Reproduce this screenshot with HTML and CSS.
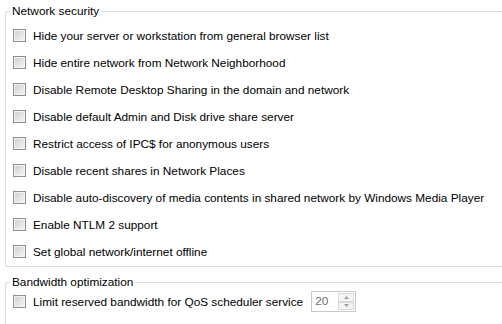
FILE: index.html
```html
<!doctype html>
<html lang="en">
  <head>
    <meta charset="UTF-8" />
    <title>Network settings</title>
    <link rel="stylesheet" href="styles.css">
  </head>
  <body>
    <fieldset class="group">
      <legend>Network security</legend>
      <label class="row"><span class="check"></span>Hide your server or workstation from general browser list</label>
      <label class="row"><span class="check"></span>Hide entire network from Network Neighborhood</label>
      <label class="row"><span class="check"></span>Disable Remote Desktop Sharing in the domain and network</label>
      <label class="row"><span class="check"></span>Disable default Admin and Disk drive share server</label>
      <label class="row"><span class="check"></span>Restrict access of IPC$ for anonymous users</label>
      <label class="row"><span class="check"></span>Disable recent shares in Network Places</label>
      <label class="row"><span class="check"></span>Disable auto-discovery of media contents in shared network by Windows Media Player</label>
      <label class="row"><span class="check"></span>Enable NTLM 2 support</label>
      <label class="row"><span class="check"></span>Set global network/internet offline</label>
    </fieldset>

    <fieldset class="group second">
      <legend>Bandwidth optimization</legend>
      <div class="row short">
        <span class="check"></span>Limit reserved bandwidth for QoS scheduler service
        <span class="spin">
          <span class="spin-value">20</span>
          <span class="spin-buttons">
            <span class="spin-btn"><svg width="5" height="3" viewBox="0 0 5 3"><path d="M0 3 L2.5 0 L5 3 Z" fill="#a0a0a0"/></svg></span>
            <span class="spin-btn"><svg width="5" height="3" viewBox="0 0 5 3"><path d="M0 0 L2.5 3 L5 0 Z" fill="#a0a0a0"/></svg></span>
          </span>
        </span>
      </div>
    </fieldset>
  </body>
</html>
```

FILE: styles.css
```css
body {
  margin: 0;
  background: #fff;
  font-family: "Liberation Sans", Arial, sans-serif;
  font-size: 11.8px;
  color: #000;
}
.group {
  margin: 4px 0 0 5px;
  padding: 4px 0 1px 7px;
  border: 1px solid #d5dfe5;
  border-right: none;
  border-radius: 3px 0 0 3px;
  min-width: 0;
}
.group legend {
  padding: 0 2px;
  margin-left: -3px;
  line-height: 14px;
}
.second {
  margin-top: 8px;
  padding-top: 0;
  padding-bottom: 20px;
}
.row {
  display: flex;
  align-items: center;
  height: 27px;
  white-space: nowrap;
}
.row.short {
  height: 25px;
}
.check {
  box-sizing: border-box;
  width: 13px;
  height: 13px;
  margin-right: 7px;
  border: 1px solid #8e8f8f;
  background: linear-gradient(135deg, #c9ccd1 0%, #e6e7e9 60%, #f5f5f6 100%);
  box-shadow: inset 0 0 0 1px #f4f4f4;
  flex: none;
}
.spin {
  display: flex;
  box-sizing: border-box;
  width: 45px;
  height: 21px;
  margin-left: 8px;
  border: 1px solid #c9c9c9;
  background: #fff;
}
.spin-value {
  flex: 1;
  padding: 2px 0 0 3px;
  color: #6d6d6d;
}
.spin-buttons {
  display: flex;
  flex-direction: column;
  width: 16px;
  padding: 1px 1px 1px 0;
}
.spin-btn {
  flex: 1;
  display: flex;
  align-items: center;
  justify-content: center;
  border: 1px solid #d9d9d9;
  background: #f4f4f4;
}
```
